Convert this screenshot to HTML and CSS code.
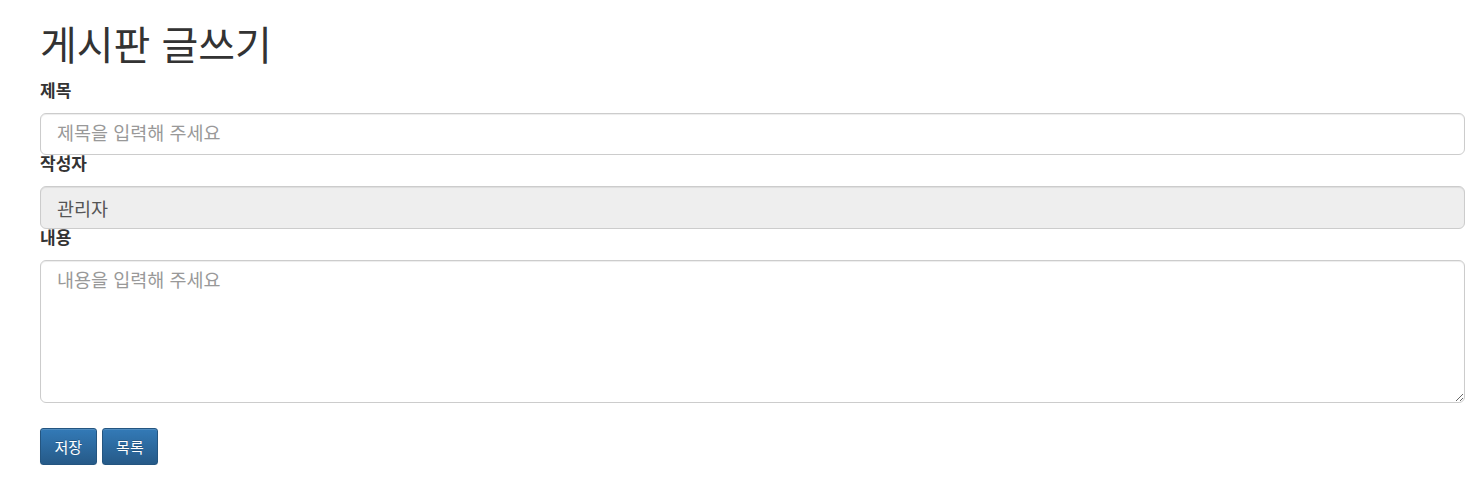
FILE: index.html
```html
<!DOCTYPE html>
<html lang="ko">
<head>
<meta charset="utf-8">
<title>게시판 글쓰기</title>
<link rel="stylesheet" href="styles.css">
</head>
<body>
<div class="page">
  <h1 class="title">게시판 글쓰기</h1>
  <form class="form">
    <div class="field">
      <label class="label" for="t">제목</label>
      <input class="control" id="t" type="text" placeholder="제목을 입력해 주세요">
    </div>
    <div class="field">
      <label class="label" for="w">작성자</label>
      <input class="control readonly" id="w" type="text" value="관리자" readonly>
    </div>
    <div class="field">
      <label class="label" for="c">내용</label>
      <textarea class="control area" id="c" placeholder="내용을 입력해 주세요"></textarea>
    </div>
    <div class="actions">
      <button type="button" class="btn">저장</button>
      <button type="button" class="btn">목록</button>
    </div>
  </form>
</div>
</body>
</html>
```

FILE: styles.css
```css
* { box-sizing: border-box; }
html, body { margin: 0; padding: 0; background: #fff; }
body {
  font-family: "Liberation Sans", "Noto Sans CJK KR", sans-serif;
  color: #333;
  font-size: 14px;
  line-height: 1.42857;
}
.page {
  padding: 22px 15px 0 40px;
}
.title {
  margin: 0 0 12px 0;
  font-size: 40px;
  font-weight: 400;
  line-height: 48px;
  color: #333;
}
.form { display: flex; flex-direction: column; }
.field { display: flex; flex-direction: column; }
.label {
  font-size: 17px;
  font-weight: 700;
  line-height: 20px;
  margin-bottom: 11px;
}
.control {
  display: block;
  width: 100%;
  height: 42px;
  padding: 8px 16px;
  font-family: inherit;
  font-size: 18.5px;
  line-height: 1.33;
  color: #555;
  background: #fff;
  border: 1px solid #ccc;
  border-radius: 6px;
  box-shadow: inset 0 1px 1px rgba(0,0,0,0.075);
  outline: none;
}
.control::placeholder { color: #999; }
.readonly { background: #eee; height: 43px; }
.area {
  height: 143px;
  resize: vertical;
}
.actions {
  display: flex;
  gap: 5px;
  margin-top: 25px;
}
.btn {
  height: 37px;
  padding: 0 13.5px;
  font-family: inherit;
  font-size: 15px;
  color: #fff;
  background: linear-gradient(to bottom, #337ab7 0, #265a88 100%);
  border: 1px solid #245580;
  border-radius: 3px;
  box-shadow: inset 0 1px 0 rgba(255,255,255,0.15), 0 1px 1px rgba(0,0,0,0.075);
  text-shadow: 0 -1px 0 rgba(0,0,0,0.2);
  cursor: pointer;
}
```
